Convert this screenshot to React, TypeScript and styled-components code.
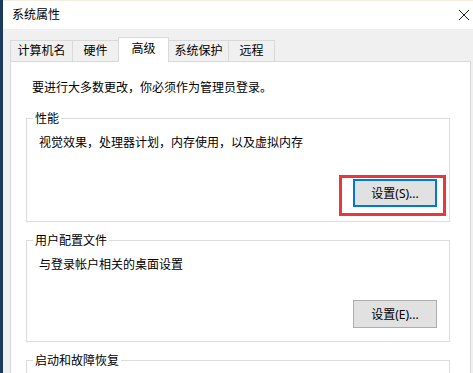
import React from 'react';
import styled, { createGlobalStyle } from 'styled-components';

const Global = createGlobalStyle`
  html, body { margin: 0; padding: 0; width: 473px; height: 373px; overflow: hidden; background: #f0f0f0; }
  body { font-family: "Noto Sans", "Noto Sans CJK SC", sans-serif; font-size: 12px; color: #000; }
  * { box-sizing: border-box; }
`;

const Window = styled.div`
  width: 473px;
  height: 373px;
  border-left: 3px solid #1b3a60;
  background: #f0f0f0;
  display: flex;
  flex-direction: column;
  overflow: hidden;
`;

const TitleBar = styled.div`
  height: 29px;
  flex: none;
  background: #fff;
  border-top: 1px solid #f7eee2;
  display: flex;
  align-items: center;
  justify-content: space-between;
  padding: 0 3px 0 9px;
`;

const Title = styled.span`
  font-size: 12px;
  line-height: 16px;
  color: #000;
`;

const Body = styled.div`
  flex: 1;
  display: flex;
  flex-direction: column;
  padding: 8px 2px 0 7px;
  min-height: 0;
`;

const TabStrip = styled.div`
  display: flex;
  align-items: flex-start;
  height: 25px;
  margin-bottom: -1px;
  position: relative;
  z-index: 1;
`;

const Tab = styled.div<{ $w: number; $active?: boolean }>`
  width: ${(p) => p.$w}px;
  height: ${(p) => (p.$active ? 25 : 21)}px;
  margin-top: ${(p) => (p.$active ? 0 : 3)}px;
  margin-right: -1px;
  border: 1px solid #d9d9d9;
  border-bottom: none;
  background: ${(p) => (p.$active ? '#fff' : '#f0f0f0')};
  position: relative;
  z-index: ${(p) => (p.$active ? 2 : 1)};
  display: flex;
  align-items: center;
  justify-content: center;
  padding-bottom: ${(p) => (p.$active ? 2 : 0)}px;
  line-height: 16px;
  color: #000;
`;

const Panel = styled.div`
  flex: 1;
  background: #fff;
  border: 1px solid #d9d9d9;
  padding: 18px 20px 0 15px;
  display: flex;
  flex-direction: column;
`;

const Intro = styled.div`
  padding-left: 6px;
  line-height: 16px;
  margin-bottom: 22px;
`;

const Group = styled.div<{ $h: number }>`
  position: relative;
  flex: none;
  height: ${(p) => p.$h}px;
  border: 1px solid #dcdcdc;
  padding: 16px 12px 0 12px;
  margin-bottom: 18px;
  display: flex;
  flex-direction: column;
`;

const Legend = styled.span`
  position: absolute;
  top: -8px;
  left: 6px;
  padding: 0 2px;
  background: #fff;
  line-height: 16px;
`;

const Desc = styled.div`
  line-height: 16px;
`;

const ButtonWrap = styled.div<{ $mb: number }>`
  position: relative;
  align-self: flex-end;
  margin-top: auto;
  margin-bottom: ${(p) => p.$mb}px;
`;

const Button = styled.button<{ $default?: boolean }>`
  width: 84px;
  height: 28px;
  background: #e1e1e1;
  border: ${(p) => (p.$default ? '2px solid #0078d7' : '1px solid #adadad')};
  font-family: "Noto Sans", "Noto Sans CJK SC", sans-serif;
  font-size: 12px;
  color: #000;
  padding: 0;
  display: flex;
  align-items: center;
  justify-content: center;
`;

const Highlight = styled.div`
  position: absolute;
  top: -4px;
  right: -9px;
  bottom: -9px;
  left: -14px;
  border: 3px solid #e8383d;
  pointer-events: none;
`;

const CloseIcon = () => (
  <svg width="12" height="12" viewBox="0 0 12 12" aria-hidden="true">
    <path d="M1 1 L11 11 M11 1 L1 11" stroke="#222" strokeWidth="1" fill="none" />
  </svg>
);

const tabs: { label: string; w: number; active?: boolean }[] = [
  { label: '计算机名', w: 63 },
  { label: '硬件', w: 47 },
  { label: '高级', w: 51, active: true },
  { label: '系统保护', w: 61 },
  { label: '远程', w: 47 },
];

export default function App() {
  return (
    <>
      <Global />
      <Window>
        <TitleBar>
          <Title>系统属性</Title>
          <CloseIcon />
        </TitleBar>
        <Body>
          <TabStrip>
            {tabs.map((t) => (
              <Tab key={t.label} $w={t.w} $active={t.active}>
                {t.label}
              </Tab>
            ))}
          </TabStrip>
          <Panel>
            <Intro>要进行大多数更改，你必须作为管理员登录。</Intro>
            <Group $h={104}>
              <Legend>性能</Legend>
              <Desc>视觉效果，处理器计划，内存使用，以及虚拟内存</Desc>
              <ButtonWrap $mb={14}>
                <Button $default>设置(S)...</Button>
                <Highlight />
              </ButtonWrap>
            </Group>
            <Group $h={102}>
              <Legend>用户配置文件</Legend>
              <Desc>与登录帐户相关的桌面设置</Desc>
              <ButtonWrap $mb={13}>
                <Button>设置(E)...</Button>
              </ButtonWrap>
            </Group>
            <Group $h={80}>
              <Legend>启动和故障恢复</Legend>
            </Group>
          </Panel>
        </Body>
      </Window>
    </>
  );
}
